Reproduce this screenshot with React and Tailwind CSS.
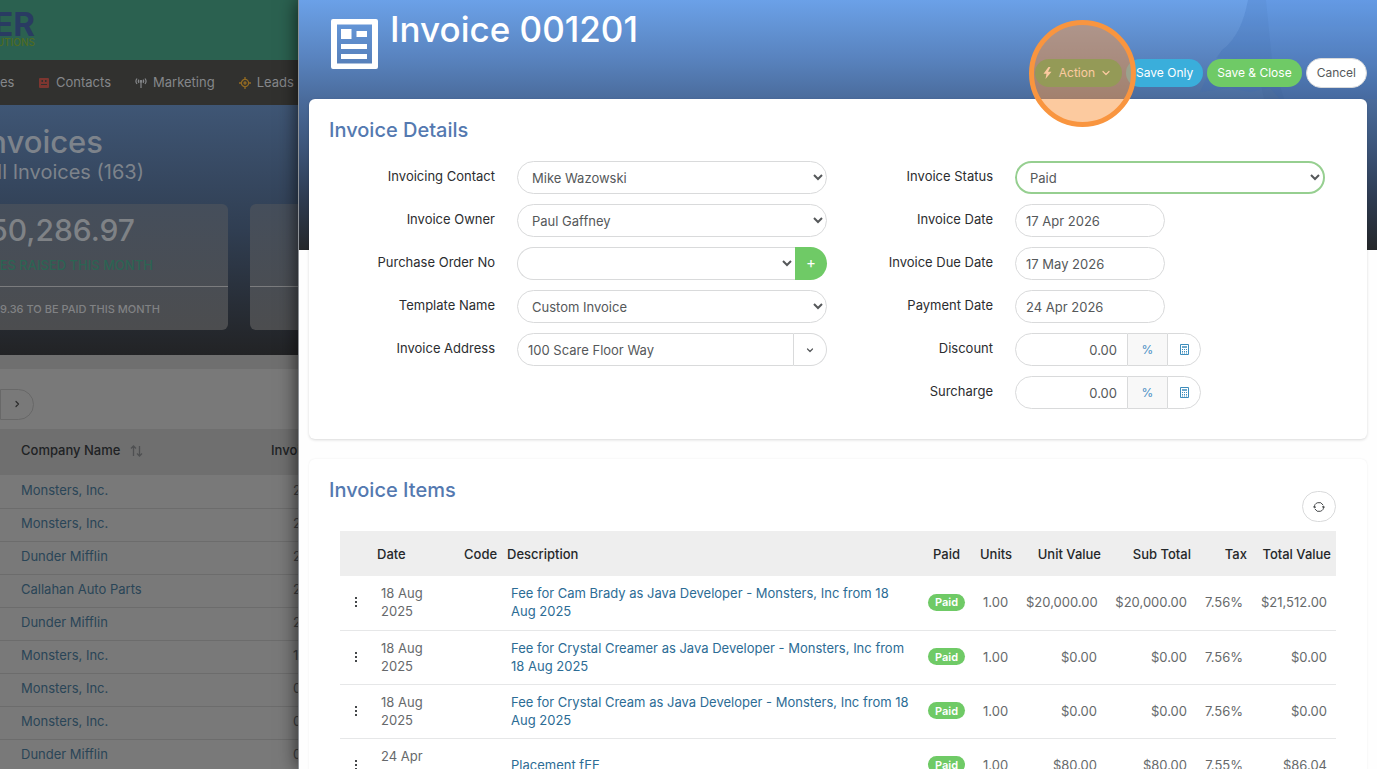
import { useState } from 'react'

const navItems = [
  { label: 'Contacts', icon: ContactsIcon },
  { label: 'Marketing', icon: MarketingIcon },
  { label: 'Leads', icon: LeadsIcon },
]

const companies = [
  { name: 'Monsters, Inc.', no: '2' },
  { name: 'Monsters, Inc.', no: '2' },
  { name: 'Dunder Mifflin', no: '2' },
  { name: 'Callahan Auto Parts', no: '2' },
  { name: 'Dunder Mifflin', no: '2' },
  { name: 'Monsters, Inc.', no: '1' },
  { name: 'Monsters, Inc.', no: '0' },
  { name: 'Monsters, Inc.', no: '0' },
  { name: 'Dunder Mifflin', no: '0' },
]

const items = [
  {
    date: '18 Aug 2025',
    description: 'Fee for Cam Brady as Java Developer - Monsters, Inc from 18 Aug 2025',
    units: '1.00',
    unitValue: '$20,000.00',
    subTotal: '$20,000.00',
    tax: '7.56%',
    total: '$21,512.00',
  },
  {
    date: '18 Aug 2025',
    description: 'Fee for Crystal Creamer as Java Developer - Monsters, Inc from 18 Aug 2025',
    units: '1.00',
    unitValue: '$0.00',
    subTotal: '$0.00',
    tax: '7.56%',
    total: '$0.00',
  },
  {
    date: '18 Aug 2025',
    description: 'Fee for Crystal Cream as Java Developer - Monsters, Inc from 18 Aug 2025',
    units: '1.00',
    unitValue: '$0.00',
    subTotal: '$0.00',
    tax: '7.56%',
    total: '$0.00',
  },
  {
    date: '24 Apr 2026',
    description: 'Placement fEE',
    units: '1.00',
    unitValue: '$80.00',
    subTotal: '$80.00',
    tax: '7.55%',
    total: '$86.04',
  },
]

const fieldClass = 'h-[33px] bg-white text-[13px] text-[#55585a] outline-none'

function ContactsIcon() {
  return (
    <svg viewBox="0 0 12 12" className="size-3" fill="#7d3630">
      <path
        fillRule="evenodd"
        d="M2 1h8a1 1 0 0 1 1 1v8a1 1 0 0 1-1 1H2a1 1 0 0 1-1-1V2a1 1 0 0 1 1-1Zm1.500 2v2H5V3H3.500Zm3.500 0v2h1.500V3H7ZM3 7v1h6V7H3Z"
      />
    </svg>
  )
}

function MarketingIcon() {
  return (
    <svg viewBox="0 0 12 12" className="size-3" fill="none" stroke="#85878a" strokeWidth="1.200">
      <path d="M2 1.500a4.500 4.500 0 0 0 0 5.500M10 1.500a4.500 4.500 0 0 1 0 5.500M4 2.700a2.500 2.500 0 0 0 0 3.200M8 2.700a2.500 2.500 0 0 1 0 3.200M6 5v6" />
      <circle cx="6" cy="4.300" r="0.800" fill="#85878a" />
    </svg>
  )
}

function LeadsIcon() {
  return (
    <svg viewBox="0 0 12 12" className="size-3" fill="none" stroke="#926a22" strokeWidth="1.300">
      <circle cx="6" cy="6" r="3.600" />
      <circle cx="6" cy="6" r="1" />
      <path d="M6 0v2.500M6 9.500V12M0 6h2.500M9.500 6H12" />
    </svg>
  )
}

function InvoiceIcon() {
  return (
    <svg viewBox="0 0 47 50" className="h-[50px] w-[47px]" fill="#fff">
      <path
        fillRule="evenodd"
        d="M2 0h43a2 2 0 0 1 2 2v46a2 2 0 0 1-2 2H2a2 2 0 0 1-2-2V2a2 2 0 0 1 2-2Zm4 5.500v39h35v-39H6Z"
      />
      <path d="M10 10h10.500v10H10zM25.500 12H36v6H25.500zM10 25h26v5H10zM10 35h26v5H10z" />
    </svg>
  )
}

function CalculatorIcon() {
  return (
    <svg viewBox="0 0 11 11" className="size-[11px]" fill="none" stroke="#3d8dbc">
      <path d="M1.500.5h8v10h-8z" />
      <path d="M3 3h5" strokeWidth="1.500" />
      <path d="M3 5.500h1m1 0h1m1 0h1M3 7.500h1m1 0h1m1 0h1M3 9h1m1 0h1m1 0h1" />
    </svg>
  )
}

function ChevronIcon({ className, d }) {
  return (
    <svg
      viewBox="0 0 8 8"
      className={className}
      fill="none"
      stroke="currentColor"
      strokeWidth="1.200"
      strokeLinecap="round"
      strokeLinejoin="round"
    >
      <path d={d} />
    </svg>
  )
}

function Field({ id, label, children }) {
  return (
    <div className="flex h-[33px]">
      <label htmlFor={id} className="mr-[22px] w-[166px] shrink-0 pt-1.5 text-right text-[13px] leading-[18px] text-[#2b2d2f]">
        {label}
      </label>
      <div className="flex min-w-0 flex-1">{children}</div>
    </div>
  )
}

function SelectInput({ id, value, className = 'rounded-full border border-[#d9dadb] pl-2.5' }) {
  return (
    <select id={id} className={`${fieldClass} min-w-0 flex-1 ${className}`}>
      <option>{value}</option>
    </select>
  )
}

function DateInput({ id, value }) {
  return (
    <input
      id={id}
      type="text"
      defaultValue={value}
      className={`${fieldClass} w-[150px] rounded-full border border-[#d9dadb] px-2.5`}
    />
  )
}

function AmountInput({ id }) {
  const [value, setValue] = useState('0.00')

  return (
    <>
      <input
        id={id}
        type="text"
        value={value}
        onChange={(e) => setValue(e.target.value)}
        className={`${fieldClass} w-[113px] rounded-l-full border border-[#d9dadb] px-2.5 text-right`}
      />
      <button className="h-[33px] w-[39px] border-y border-[#d9dadb] bg-[#f8f8f8] text-[12px] text-[#4a90c4]">%</button>
      <button
        aria-label="Calculate"
        className="flex h-[33px] w-[34px] items-center justify-center rounded-r-full border border-[#d9dadb] bg-white"
      >
        <CalculatorIcon />
      </button>
    </>
  )
}

function StatCard({ className, children }) {
  return (
    <div className={`flex h-[126px] shrink-0 flex-col overflow-hidden bg-linear-to-b from-[#454e5b] to-[#4c4d4f] ${className}`}>
      {children}
    </div>
  )
}

function InvoiceList() {
  return (
    <div className="flex w-[298px] shrink-0 flex-col overflow-hidden bg-[#797979]">
      <div className="flex h-[60px] shrink-0 flex-col bg-[#2b6150] pt-2.5">
        <div className="flex w-[35px] justify-end text-[33px] leading-7 font-bold text-[#293b62]">ER</div>
        <div className="flex w-[35px] justify-end text-[10px] leading-2 font-medium text-[#4f6b22]">UTIONS</div>
      </div>

      <nav className="flex h-[45px] shrink-0 items-center bg-[#31312f] text-[13px] text-[#85878a]">
        <a href="#" className="w-[38px]">
          es
        </a>
        {navItems.map(({ label, icon: Icon }) => (
          <a key={label} href="#" className="mr-6 flex shrink-0 items-center gap-1.5 last:mr-0">
            <Icon />
            {label}
          </a>
        ))}
      </nav>

      <div className="flex h-[250px] shrink-0 flex-col bg-linear-to-b from-[#3f5675] via-[#303e52] to-[#222325]">
        <div className="flex h-[99px] flex-col items-start pt-5 text-[#7d838b]">
          <h2 className="flex w-[103px] justify-end text-[31px] leading-[34px] font-medium">Invoices</h2>
          <p className="flex w-[144px] justify-end text-[20px] leading-[26px] whitespace-nowrap">All Invoices (163)</p>
        </div>
        <div className="flex gap-[22px]">
          <StatCard className="w-[228px] rounded-r-md">
            <p className="flex h-[53px] w-[135px] items-center justify-end text-[30px] font-medium text-[#7f8286]">50,286.97</p>
            <p className="flex h-[29px] w-[153px] items-start justify-end text-[13px] leading-4 font-medium whitespace-nowrap text-[#2c6453]">
              ES RAISED THIS MONTH
            </p>
            <p className="flex flex-1 items-center border-t border-[#7b7c7e] pt-0.5 text-[11px] font-medium whitespace-nowrap text-[#818284]">
              9.36 TO BE PAID THIS MONTH
            </p>
          </StatCard>
          <StatCard className="w-[228px] rounded-l-md">
            <div className="mt-[82px] border-t border-[#7b7c7e]" />
          </StatCard>
        </div>
      </div>

      <div className="h-3.5 shrink-0 bg-[#6f6f6f]" />
      <div className="flex h-[60px] shrink-0 items-center pt-2.5">
        <button
          aria-label="Next page"
          className="flex h-[31px] w-[34px] items-center justify-center rounded-r-full border border-[#686868] text-[#2c2c2c]"
        >
          <ChevronIcon className="size-2" d="M3 1.500 5.500 4 3 6.500" />
        </button>
      </div>

      <table className="w-[420px] shrink-0 table-fixed text-left text-[13px]">
        <thead>
          <tr className="h-[46px] bg-[#6f6f6f] text-[#202224] *:pb-0.5">
            <th className="w-[271px] pl-[21px] font-medium">
              <span className="flex items-center gap-2.5">
                Company Name
                <svg viewBox="0 0 13 12" className="h-3 w-[13px]" fill="none" stroke="#4f5052" strokeWidth="1.300">
                  <path d="M3.500 11V1M1 3.500 3.500 1 6 3.500M9.500 1v10M7 8.500 9.500 11 12 8.500" />
                </svg>
              </span>
            </th>
            <th className="font-medium">Invoice</th>
          </tr>
        </thead>
        <tbody>
          {companies.map((row, i) => (
            <tr key={i} className="h-[33px] border-b border-[#6c6c6c] *:pb-0.5">
              <td className="pl-[21px]">
                <a href="#" className="text-[#2a4557]">
                  {row.name}
                </a>
              </td>
              <td className="pl-[22px] text-[#3b3c3e]">{row.no}</td>
            </tr>
          ))}
        </tbody>
      </table>
    </div>
  )
}

export default function App() {
  return (
    <div className="flex h-screen overflow-hidden bg-white font-['Inter',sans-serif]">
      <InvoiceList />

      {/* Invoice drawer */}
      <main className="relative min-w-0 flex-1 overflow-hidden border-l border-[#8f9398] bg-[#fefefe] bg-[linear-gradient(to_bottom,#6ba1e8_0%,#5882bd_24%,#4a6b9b_40%,#3c5478_60%,#2e3b50_80%,#25272a_100%)] bg-[length:100%_250px] bg-no-repeat px-2.5 shadow-[0_0_18px_rgba(0,0,0,0.7)]">
        {/* Faint silhouette behind the header */}
        <svg viewBox="0 0 177 99" className="absolute top-0 right-0 h-[99px] w-[177px]" fill="#2462c0">
          <path d="M48 0C44 22 36 40 22 50L10 70 0 92l30-4 20 4 20-4 10 11h97V0Z" opacity="0.1" />
          <path d="M48 0C44 22 36 40 22 50l-6 8 40 2 8 39h20L72 60 66 0Z" fill="#1c3f75" opacity="0.06" />
        </svg>

        <header className="relative z-10 flex h-[99px] justify-between">
          <div className="flex items-start gap-3 pt-[19px] pl-[22px]">
            <InvoiceIcon />
            <h1 className="-mt-2.5 text-[35px] leading-10 font-medium text-white">Invoice 001201</h1>
          </div>

          <div className="flex items-center gap-1 pt-[46px] text-[12px] text-white">
            <div className="relative">
              <button className="flex h-7 items-center gap-[7px] rounded-full bg-[#2f9e6e] pr-3 pl-2">
                <svg viewBox="0 0 9 12" className="h-3 w-[9px]" fill="currentColor">
                  <path d="M5.500 0 .5 6.800h3L2.500 12 8.500 4.800H5L7.500 0Z" />
                </svg>
                Action
                <ChevronIcon className="size-2" d="M1 2.500 4 5.500 7 2.500" />
              </button>
              {/* Click marker */}
              <span className="pointer-events-none absolute -top-[39px] -left-1.5 z-10 size-[107px] rounded-full border-[5px] border-[#f9953f] bg-[#f9953f]/50" />
            </div>
            <button className="h-7 rounded-full bg-[#3aaedb] px-2.5">Save Only</button>
            <button className="h-7 rounded-full bg-[#6fca66] px-2.5">Save &amp; Close</button>
            <button className="h-[30px] rounded-full border border-[#d9dadb] bg-white px-2.5 text-[#55585a]">Cancel</button>
          </div>
        </header>

        {/* Details */}
        <section className="relative rounded-md bg-white px-5 pt-4 pb-[30px] shadow-[0_1px_3px_rgba(0,0,0,0.15)]">
          <h2 className="text-[20px] leading-[30px] font-medium text-[#5479b0]">Invoice Details</h2>
          <div className="mt-4 grid grid-cols-2 pr-[22px]">
            <div className="flex flex-col gap-2.5">
              <Field id="contact" label="Invoicing Contact">
                <SelectInput id="contact" value="Mike Wazowski" />
              </Field>
              <Field id="owner" label="Invoice Owner">
                <SelectInput id="owner" value="Paul Gaffney" />
              </Field>
              <Field id="po" label="Purchase Order No">
                <SelectInput id="po" value="" className="rounded-l-full border border-r-0 border-[#d9dadb] pl-2.5" />
                <button
                  aria-label="Add purchase order"
                  className="flex w-8 items-center justify-center rounded-r-full bg-[#6fca66] text-[15px] text-white"
                >
                  +
                </button>
              </Field>
              <Field id="template" label="Template Name">
                <SelectInput id="template" value="Custom Invoice" />
              </Field>
              <Field id="address" label="Invoice Address">
                <input
                  id="address"
                  type="text"
                  defaultValue="100 Scare Floor Way"
                  className={`${fieldClass} min-w-0 flex-1 rounded-l-full border border-[#d9dadb] px-2.5`}
                />
                <button
                  aria-label="Show addresses"
                  className="flex w-[33px] items-center justify-center rounded-r-full border border-l-0 border-[#d9dadb] text-[#55585a]"
                >
                  <ChevronIcon className="size-2" d="M1.500 3 4 5.500 6.500 3" />
                </button>
              </Field>
            </div>

            <div className="flex flex-col gap-2.5">
              <Field id="status" label="Invoice Status">
                <SelectInput id="status" value="Paid" className="rounded-full border-2 border-[#96cf90] pl-[9px]" />
              </Field>
              <Field id="date" label="Invoice Date">
                <DateInput id="date" value="17 Apr 2026" />
              </Field>
              <Field id="due" label="Invoice Due Date">
                <DateInput id="due" value="17 May 2026" />
              </Field>
              <Field id="payment" label="Payment Date">
                <DateInput id="payment" value="24 Apr 2026" />
              </Field>
              <Field id="discount" label="Discount">
                <AmountInput id="discount" />
              </Field>
              <Field id="surcharge" label="Surcharge">
                <AmountInput id="surcharge" />
              </Field>
            </div>
          </div>
        </section>

        {/* Items */}
        <section className="mt-5 rounded-md bg-white px-5 pt-4 pb-10 shadow-[0_0_2px_rgba(0,0,0,0.08)]">
          <div className="mb-[9px] flex items-start justify-between">
            <h2 className="text-[20px] leading-[30px] font-medium text-[#5479b0]">Invoice Items</h2>
            <button
              aria-label="Refresh items"
              className="mt-4 mr-[11px] flex h-[31px] w-[34px] items-center justify-center rounded-full border border-[#d9dadb] text-[#45484a]"
            >
              <svg viewBox="0 0 12 12" className="size-3" fill="none" stroke="currentColor">
                <path d="M1.500 6.500a4.500 4.500 0 0 1 8.500-2.500M10.500 5.500A4.500 4.500 0 0 1 2 8" />
                <path d="M.5 5.500 1.500 7 3 5.700M9 6.300 10.500 5l1 1.500" />
              </svg>
            </button>
          </div>

          <div className="mx-[11px]">
            <table className="w-full table-fixed text-right text-[13px] leading-[18px] text-[#66696b]">
              <thead>
                <tr className="h-[45px] bg-[#eeeeee] text-[#25282a] *:px-[5px] *:font-medium">
                  <th className="w-8" />
                  <th className="w-[87px] text-left">Date</th>
                  <th className="w-[43px] text-left">Code</th>
                  <th className="text-left">Description</th>
                  <th className="w-[55px] text-center">Paid</th>
                  <th className="w-[43px]">Units</th>
                  <th className="w-[89px]">Unit Value</th>
                  <th className="w-[90px]">Sub Total</th>
                  <th className="w-14">Tax</th>
                  <th className="w-[84px] whitespace-nowrap">Total Value</th>
                </tr>
              </thead>
              <tbody>
                {items.map((item, i) => (
                  <tr key={i} className="h-[54px] border-b border-[#e6e7e8] *:px-[9px] *:pt-2 *:pb-[9px]">
                    <td className="text-center">
                      <button aria-label="Row menu" className="flex w-3.5 justify-center">
                        <svg viewBox="0 0 2 10" className="h-2.5 w-0.5" fill="#45484a">
                          <path d="M0 0h2v2H0zM0 4h2v2H0zM0 8h2v2H0z" />
                        </svg>
                      </button>
                    </td>
                    <td className="text-left">{item.date}</td>
                    <td />
                    <td className="text-left">
                      <a href="#" className="text-[#2c6c95]">
                        {item.description}
                      </a>
                    </td>
                    <td>
                      <span className="flex h-[17px] items-center justify-center rounded-full bg-[#6fca66] text-[11px] font-semibold text-white">
                        Paid
                      </span>
                    </td>
                    <td>{item.units}</td>
                    <td>{item.unitValue}</td>
                    <td>{item.subTotal}</td>
                    <td>{item.tax}</td>
                    <td>{item.total}</td>
                  </tr>
                ))}
              </tbody>
            </table>
          </div>
        </section>
      </main>
    </div>
  )
}
